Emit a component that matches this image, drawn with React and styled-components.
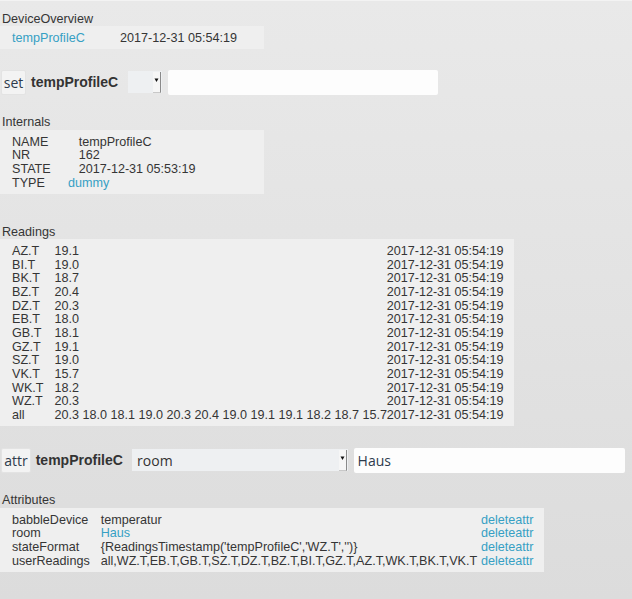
import React from "react";
import styled, { createGlobalStyle } from "styled-components";

const Global = createGlobalStyle`
  html, body { margin: 0; padding: 0; }
  body {
    min-height: 100vh;
    background: linear-gradient(to bottom, #e9e9e9 0%, #dcdcdc 100%);
    font-family: "Liberation Sans", Arial, sans-serif;
    color: #353535;
  }
`;

const Page = styled.div`
  min-height: 599px;
  box-sizing: border-box;
  border-top: 1px solid #f3f3f3;
  padding-top: 11.5px;
  display: flex;
  flex-direction: column;
  align-items: flex-start;
`;

const Label = styled.div`
  font-size: 12.6px;
  line-height: 13.67px;
  padding-left: 2px;
  margin-top: ${(p) => p.$top || 0}px;
`;

const Block = styled.div`
  box-sizing: border-box;
  width: ${(p) => p.$w}px;
  background: #efefef;
  padding: ${(p) => p.$pad || "5.7px 0 3.3px 12px"};
  display: grid;
  grid-template-columns: ${(p) => p.$cols};
  justify-content: start;
  font-size: 12.6px;
  line-height: 13.67px;
  white-space: nowrap;
`;

const Cell = styled.div`
  color: #353535;
`;

const Link = styled.span`
  color: #36a0c4;
  margin-left: ${(p) => p.$shift || 0}px;
`;

const CmdRow = styled.div`
  display: flex;
  align-items: center;
  margin-top: ${(p) => p.$top}px;
  padding-left: 1px;
  height: 25.6px;
`;

const CmdButton = styled.div`
  box-sizing: border-box;
  width: ${(p) => p.$w}px;
  height: 25.6px;
  display: flex;
  align-items: center;
  justify-content: center;
  background: #f3f3f3;
  border: 1px solid #e3e3e3;
  border-radius: 2px;
  font-family: "Open Sans", sans-serif;
  font-size: 14px;
  color: #2e3b4c;
`;

const DevName = styled.div`
  font-family: "Liberation Sans", Arial, sans-serif;
  font-weight: bold;
  font-size: 14px;
  color: #333;
  margin-left: ${(p) => p.$gap}px;
  margin-right: ${(p) => p.$after}px;
`;

const Select = styled.div`
  box-sizing: border-box;
  width: ${(p) => p.$w}px;
  height: 22px;
  background: #eef0f2;
  display: flex;
  align-items: stretch;
  font-family: "Open Sans", sans-serif;
  font-size: 14px;
  color: #333;
`;

const SelectText = styled.div`
  flex: 1;
  display: flex;
  align-items: center;
  padding-left: 5px;
`;

const Arrow = styled.div`
  width: 7px;
  display: flex;
  align-items: flex-start;
  justify-content: center;
  background: #f6f6f6;
  border-right: 1px solid #8a8a8a;
  border-bottom: 1px solid #c8c8c8;
  margin: 1px 1px 0 0;
`;

const TextInput = styled.div`
  box-sizing: border-box;
  width: ${(p) => p.$w}px;
  height: 25.6px;
  margin-left: 5.7px;
  background: #fdfdfd;
  border-radius: 2px;
  display: flex;
  align-items: center;
  padding-left: 3.5px;
  font-family: "Open Sans", sans-serif;
  font-size: 14px;
  color: #2e3b4c;
`;

const Dropdown = ({ w, value }) => (
  <Select $w={w}>
    <SelectText>{value}</SelectText>
    <Arrow>
      <svg width="5" height="12" viewBox="0 0 5 12">
        <path d="M0.5 6.5 L4.5 6.5 L2.5 10 Z" fill="#111" />
      </svg>
    </Arrow>
  </Select>
);

const readings = [
  ["AZ.T", "19.1"],
  ["BI.T", "19.0"],
  ["BK.T", "18.7"],
  ["BZ.T", "20.4"],
  ["DZ.T", "20.3"],
  ["EB.T", "18.0"],
  ["GB.T", "18.1"],
  ["GZ.T", "19.1"],
  ["SZ.T", "19.0"],
  ["VK.T", "15.7"],
  ["WK.T", "18.2"],
  ["WZ.T", "20.3"],
  ["all", "20.3 18.0 18.1 19.0 20.3 20.4 19.0 19.1 19.1 18.2 18.7 15.7"],
];

const TS = "2017-12-31 05:54:19";

export default function App() {
  return (
    <>
      <Global />
      <Page>
        <Label>DeviceOverview</Label>
        <Block $w={264} $cols="108px auto" $pad="5.8px 0 3.5px 12px">
          <Cell>
            <Link>tempProfileC</Link>
          </Cell>
          <Cell>{TS}</Cell>
        </Block>

        <CmdRow $top={20.5}>
          <CmdButton $w={25}>set</CmdButton>
          <DevName $gap={5} $after={9.6}>tempProfileC</DevName>
          <Dropdown w={34.6} value="" />
          <TextInput $w={269.7} />
        </CmdRow>

        <Label $top={21}>Internals</Label>
        <Block $w={264} $cols="66.7px auto">
          <Cell>NAME</Cell>
          <Cell>tempProfileC</Cell>
          <Cell>NR</Cell>
          <Cell>162</Cell>
          <Cell>STATE</Cell>
          <Cell>2017-12-31 05:53:19</Cell>
          <Cell>TYPE</Cell>
          <Cell>
            <Link $shift={-10.7}>dummy</Link>
          </Cell>
        </Block>

        <Label $top={32}>Readings</Label>
        <Block $w={514} $cols="42.5px 332.2px auto">
          {readings.map(([n, v]) => (
            <React.Fragment key={n}>
              <Cell>{n}</Cell>
              <Cell>{v}</Cell>
              <Cell>{TS}</Cell>
            </React.Fragment>
          ))}
        </Block>

        <CmdRow $top={21.6}>
          <CmdButton $w={30}>attr</CmdButton>
          <DevName $gap={4.7} $after={9.3}>tempProfileC</DevName>
          <Dropdown w={216.3} value="room" />
          <TextInput $w={270.7}>Haus</TextInput>
        </CmdRow>

        <Label $top={21.2}>Attributes</Label>
        <Block $w={544} $cols="88.7px 380.3px auto">
          <Cell>babbleDevice</Cell>
          <Cell>temperatur</Cell>
          <Cell><Link>deleteattr</Link></Cell>
          <Cell>room</Cell>
          <Cell><Link>Haus</Link></Cell>
          <Cell><Link>deleteattr</Link></Cell>
          <Cell>stateFormat</Cell>
          <Cell>{"{ReadingsTimestamp('tempProfileC','WZ.T','')}"}</Cell>
          <Cell><Link>deleteattr</Link></Cell>
          <Cell>userReadings</Cell>
          <Cell>all,WZ.T,EB.T,GB.T,SZ.T,DZ.T,BZ.T,BI.T,GZ.T,AZ.T,WK.T,BK.T,VK.T</Cell>
          <Cell><Link>deleteattr</Link></Cell>
        </Block>
      </Page>
    </>
  );
}
